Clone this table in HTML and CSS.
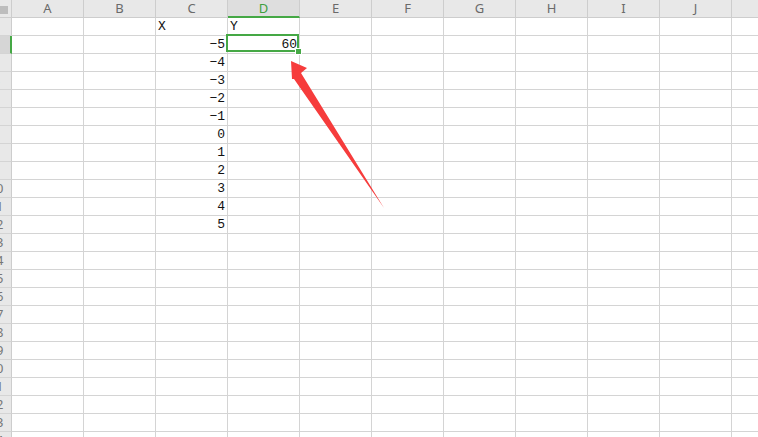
FILE: index.html
```html
<!DOCTYPE html>
<html lang="en">
<head>
    <meta charset="UTF-8">
    <title>Sheet1</title>
    <link rel="stylesheet" href="styles.css">
</head>
<body>
    <div class="sheet" id="sheet">
        <div class="row head-row">
            <div class="rowhead corner"><span class="tri"></span></div>
            <div class="colhead">A</div>
            <div class="colhead">B</div>
            <div class="colhead">C</div>
            <div class="colhead active">D</div>
            <div class="colhead">E</div>
            <div class="colhead">F</div>
            <div class="colhead">G</div>
            <div class="colhead">H</div>
            <div class="colhead">I</div>
            <div class="colhead">J</div>
            <div class="colhead"></div>
        </div>
    </div>

    <svg class="arrow" width="758" height="437" viewBox="0 0 758 437">
        <polygon points="291,61 307,68 301,73 384,208 294,79 292,79" fill="#f63c3c"/>
    </svg>

    <script>
        const data = {
            1: { C: "X", D: "Y" },
            2: { C: "-5", D: "60" },
            3: { C: "-4" },
            4: { C: "-3" },
            5: { C: "-2" },
            6: { C: "-1" },
            7: { C: "0" },
            8: { C: "1" },
            9: { C: "2" },
            10: { C: "3" },
            11: { C: "4" },
            12: { C: "5" }
        };
        const cols = ["A", "B", "C", "D", "E", "F", "G", "H", "I", "J", "K"];
        const sheet = document.getElementById("sheet");

        for (let r = 1; r <= 24; r++) {
            const row = document.createElement("div");
            row.className = "row";
            let html = `<div class="rowhead${r === 2 ? " active" : ""}"><span>${r}</span></div>`;
            cols.forEach(c => {
                const v = (data[r] && data[r][c]) || "";
                let cls = "cell";
                if (r === 1) cls += " text";
                else if (v !== "") cls += " num";
                if (r === 2 && c === "D") cls += " selected";
                html += `<div class="${cls}">${v.replace("-", "\u2212")}</div>`;
            });
            row.innerHTML = html;
            sheet.appendChild(row);
        }
    </script>
</body>
</html>
```

FILE: styles.css
```css
body {
    margin: 0;
    padding: 0;
    background: #fff;
    overflow: hidden;
    font-family: "Liberation Mono", monospace;
}

.sheet {
    width: 758px;
    height: 437px;
    overflow: hidden;
}

.row {
    display: grid;
    grid-template-columns: 12px repeat(11, 72px);
    height: 18px;
}

.row > div {
    box-sizing: border-box;
    border-right: 1px solid #d4d4d4;
    border-bottom: 1px solid #d4d4d4;
}

.head-row > div {
    background: #e8e8e8;
    border-right-color: #cdcdcd;
    border-bottom-color: #cdcdcd;
}

.colhead {
    font-family: "Noto Sans", sans-serif;
    font-size: 13px;
    line-height: 16px;
    color: #6a6a6a;
    text-align: center;
}

.colhead.active {
    color: #3f9f3f;
    background: #dedede;
    border-bottom: 2px solid #45a845 !important;
}

.corner {
    position: relative;
}

.tri {
    position: absolute;
    right: 3px;
    bottom: 3px;
    width: 0;
    height: 0;
    border-left: 8px solid transparent;
    border-bottom: 8px solid #bdbdbd;
}

.rowhead {
    background: #e8e8e8;
    display: flex;
    justify-content: flex-end;
    overflow: hidden;
    font-family: "Noto Sans", sans-serif;
    font-size: 13px;
    line-height: 17px;
    color: #777;
    border-right-color: #cdcdcd !important;
}

.rowhead span {
    flex-shrink: 0;
    width: 30px;
    text-align: center;
    white-space: nowrap;
}

.rowhead.active {
    background: #d6d6d6;
    border-right: 2px solid #45a845 !important;
}

.cell {
    font-size: 13px;
    line-height: 17px;
    color: #111;
    padding: 0 2px;
    white-space: nowrap;
}

.cell.num {
    text-align: right;
}

.cell.text {
    text-align: left;
}

.selected {
    position: relative;
}

.selected::before {
    content: "";
    position: absolute;
    top: -2px;
    left: -2px;
    right: 0;
    bottom: 1px;
    border: 2px solid #45a845;
}

.selected::after {
    content: "";
    position: absolute;
    right: -3px;
    bottom: -2px;
    width: 5px;
    height: 5px;
    background: #45a845;
    border: 1px solid #fff;
}

.arrow {
    position: absolute;
    top: 0;
    left: 0;
    pointer-events: none;
}
```
